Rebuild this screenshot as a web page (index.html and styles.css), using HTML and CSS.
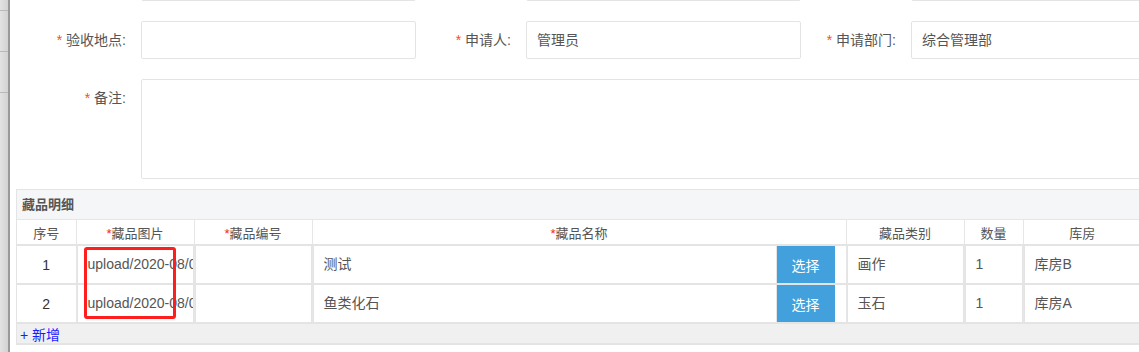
FILE: index.html
```html
<!DOCTYPE html>
<html lang="zh-CN">
<head>
    <meta charset="UTF-8">
    <meta name="viewport" content="width=device-width, initial-scale=1.0">
    <title>藏品验收</title>
    <link rel="stylesheet" href="styles.css">
</head>
<body>
    <div class="app">
        <aside class="side-nav">
            <div class="side-item"></div>
            <div class="side-item"></div>
            <div class="side-item"></div>
        </aside>

        <main class="page">
            <!-- 上一行（只露出底边） -->
            <div class="form-row form-row-prev">
                <div class="field"><span class="field-label"></span><div class="field-input"></div></div>
                <div class="field"><span class="field-label"></span><div class="field-input"></div></div>
                <div class="field"><span class="field-label"></span><div class="field-input"></div></div>
            </div>

            <div class="form-row">
                <div class="field">
                    <span class="field-label"><i class="req">*</i>验收地点:</span>
                    <div class="field-input"></div>
                </div>
                <div class="field">
                    <span class="field-label"><i class="req">*</i>申请人:</span>
                    <div class="field-input">管理员</div>
                </div>
                <div class="field">
                    <span class="field-label"><i class="req">*</i>申请部门:</span>
                    <div class="field-input">综合管理部</div>
                </div>
            </div>

            <div class="form-row">
                <div class="field field-wide">
                    <span class="field-label"><i class="req">*</i>备注:</span>
                    <div class="field-textarea"></div>
                </div>
            </div>

            <section class="detail">
                <div class="detail-title">藏品明细</div>
                <table class="detail-table">
                    <colgroup>
                        <col class="col-no">
                        <col class="col-md">
                        <col class="col-md">
                        <col class="col-name">
                        <col class="col-md">
                        <col class="col-qty">
                        <col class="col-md">
                    </colgroup>
                    <thead>
                        <tr>
                            <th>序号</th>
                            <th><i class="star">*</i>藏品图片</th>
                            <th><i class="star">*</i>藏品编号</th>
                            <th><i class="star">*</i>藏品名称</th>
                            <th>藏品类别</th>
                            <th>数量</th>
                            <th>库房</th>
                        </tr>
                    </thead>
                    <tbody>
                        <tr>
                            <td class="cell-no">1</td>
                            <td><div class="cell-input">upload/2020-08/0123.jpg</div></td>
                            <td><div class="cell-input"></div></td>
                            <td>
                                <div class="name-cell">
                                    <div class="cell-input">测试</div>
                                    <button class="pick-button">选择</button>
                                </div>
                            </td>
                            <td><div class="cell-input">画作</div></td>
                            <td><div class="cell-input">1</div></td>
                            <td><div class="cell-input">库房B</div></td>
                        </tr>
                        <tr>
                            <td class="cell-no">2</td>
                            <td><div class="cell-input">upload/2020-08/0456.jpg</div></td>
                            <td><div class="cell-input"></div></td>
                            <td>
                                <div class="name-cell">
                                    <div class="cell-input">鱼类化石</div>
                                    <button class="pick-button">选择</button>
                                </div>
                            </td>
                            <td><div class="cell-input">玉石</div></td>
                            <td><div class="cell-input">1</div></td>
                            <td><div class="cell-input">库房A</div></td>
                        </tr>
                    </tbody>
                </table>
                <div class="detail-footer"><a class="add-link" href="#">+ 新增</a></div>

                <!-- 标注框 -->
                <div class="mark-box"></div>
            </section>
        </main>
    </div>
</body>
</html>
```

FILE: styles.css
```css
/* CSS */
html, body {
    margin: 0;
    padding: 0;
    overflow: hidden;
    background-color: #ffffff;
}

body {
    font-family: "Liberation Sans", "Noto Sans CJK SC", sans-serif;
    color: #555;
}

.app {
    display: flex;
    width: 1300px;
    height: 352px;
}

/* 左侧露出的菜单边 */
.side-nav {
    width: 8px;
    flex-shrink: 0;
    background: linear-gradient(to right, #e2e2e2, #d2d2d2);
    border-right: 2px solid #999;
}

.side-item {
    height: 40px;
    border-bottom: 1px solid #b9b9b9;
}

.side-item:first-child {
    height: 10px;
}

.page {
    flex: 1;
    padding-left: 6px;
    position: relative;
}

/* 表单 */
.form-row {
    display: flex;
    padding-left: 15px;
    margin-bottom: 20px;
}

.form-row-prev {
    margin-top: -37px;
}

.field {
    display: flex;
    width: 385px;
    flex-shrink: 0;
}

.field-wide {
    width: 1157px;
}

.field-label {
    width: 110px;
    padding-right: 15px;
    box-sizing: border-box;
    text-align: right;
    font-size: 14px;
    line-height: 38px;
    color: #555;
}

.req {
    font-style: normal;
    color: #ff4a1a;
    margin-right: 4px;
}

.field-input {
    flex: 1;
    height: 38px;
    box-sizing: border-box;
    border: 1px solid #e4e4e4;
    border-radius: 2px;
    padding: 0 10px;
    font-size: 14px;
    line-height: 36px;
    color: #555;
}

.field-textarea {
    flex: 1;
    height: 100px;
    box-sizing: border-box;
    border: 1px solid #e4e4e4;
    border-radius: 2px;
}

/* 藏品明细 */
.detail {
    position: relative;
    margin-top: -10px;
    width: 1125px;
    border: 1px solid #e4e4e4;
    border-right: none;
}

.detail-title {
    height: 29px;
    line-height: 29px;
    padding-left: 5px;
    background-color: #f5f6f8;
    border-bottom: 1px solid #e6e6e6;
    font-size: 13px;
    font-weight: bold;
    color: #555;
}

.detail-table {
    width: 1124px;
    table-layout: fixed;
    border-collapse: collapse;
}

.col-no { width: 59px; }
.col-md { width: 118px; }
.col-name { width: 534px; }
.col-qty { width: 59px; }

.detail-table th {
    height: 24px;
    padding: 0;
    border-left: 1px solid #e6e6e6;
    border-bottom: 2px solid #e4e4e4;
    font-size: 13px;
    font-weight: normal;
    color: #555;
    text-align: center;
}

.detail-table th:first-child {
    border-left: none;
}

.star {
    font-style: normal;
    color: #ff1a1a;
}

.detail-table td {
    height: 37px;
    padding: 0;
    border-left: 1px solid #e6e6e6;
    border-bottom: 2px solid #e4e4e4;
}

.detail-table td:first-child {
    border-left: none;
}

.cell-no {
    text-align: center;
    font-size: 14px;
    color: #333;
}

.cell-input {
    height: 37px;
    box-sizing: border-box;
    border-left: 1px solid #e4e4e4;
    border-right: 1px solid #e4e4e4;
    padding: 0 10px;
    font-size: 14px;
    line-height: 37px;
    color: #555;
    white-space: nowrap;
    overflow: hidden;
}

.name-cell {
    display: flex;
    padding-right: 11px;
}

.name-cell .cell-input {
    flex: 1;
}

.pick-button {
    width: 58px;
    height: 37px;
    border: none;
    padding: 0;
    background-color: #42a0dd;
    color: #ffffff;
    font-family: inherit;
    font-size: 14px;
    cursor: pointer;
}

.detail-footer {
    height: 19px;
    background-color: #f0f0f0;
    border-bottom: 1px solid #e4e4e4;
    padding-left: 3px;
    line-height: 21px;
}

.add-link {
    font-size: 14px;
    color: #1a1aff;
    text-decoration: none;
}

.mark-box {
    position: absolute;
    left: 67px;
    top: 57px;
    width: 86px;
    height: 66px;
    border: 3px solid #ff1e1e;
    border-radius: 3px;
}
```
